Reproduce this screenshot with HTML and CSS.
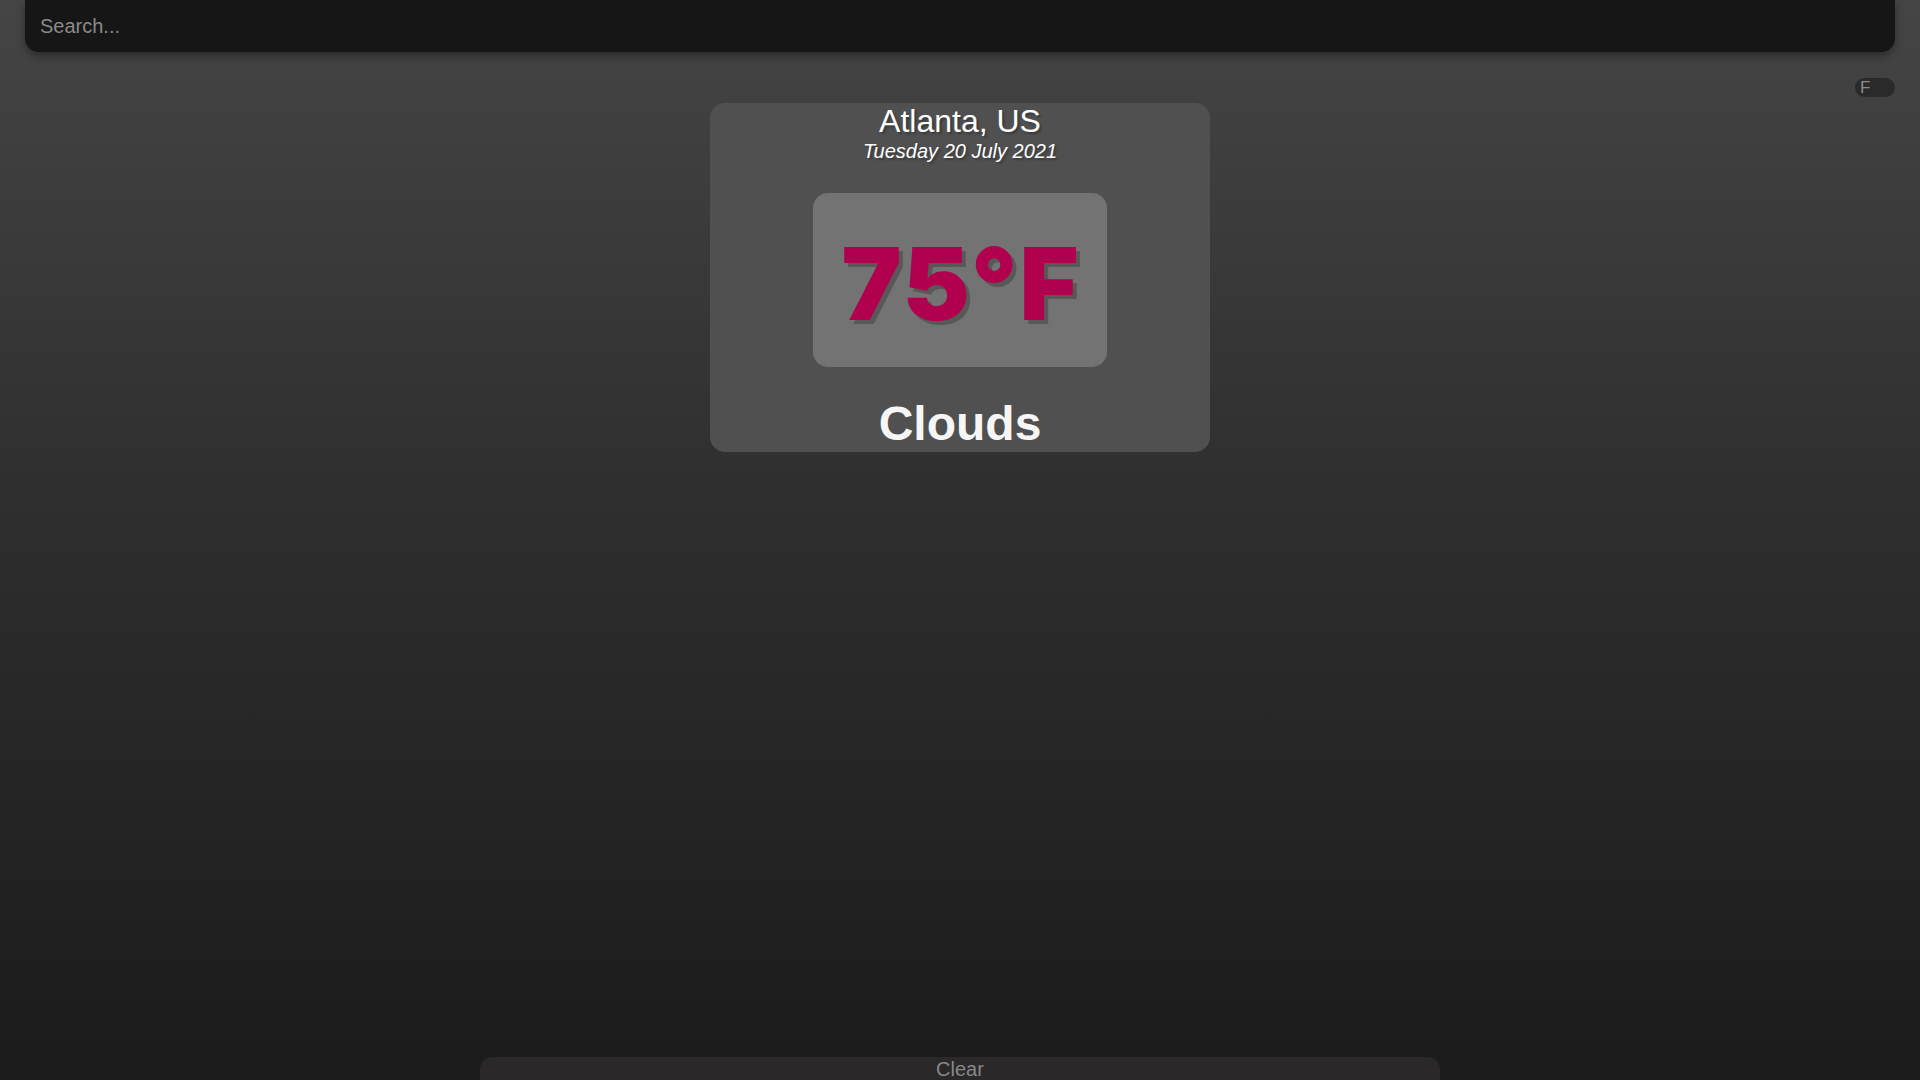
FILE: index.html
```html
<!DOCTYPE html>
<html lang="en">
<head>
<meta charset="utf-8">
<title>Weather</title>
<link rel="stylesheet" href="styles.css">
</head>
<body>
<div class="page">
  <header class="search-wrap">
    <input class="search" type="text" placeholder="Search...">
  </header>
  <div class="toggle-row">
    <div class="toggle"><span class="toggle-label">F</span></div>
  </div>
  <main class="card">
    <h2 class="location">Atlanta, US</h2>
    <div class="date">Tuesday 20 July 2021</div>
    <div class="temp-box"><span class="temp">75°F</span></div>
    <div class="weather">Clouds</div>
  </main>
  <footer class="footer">
    <button class="clear">Clear</button>
  </footer>
</div>
</body>
</html>
```
FILE: styles.css
```css
html, body {
  margin: 0;
  padding: 0;
  height: 100%;
}
body {
  background: linear-gradient(to bottom, #454545 0%, #2f2f2f 45%, #1b1b1b 100%);
  font-family: "Liberation Sans", Arial, sans-serif;
  color: #fff;
  overflow: hidden;
}
.page {
  height: 1080px;
  display: flex;
  flex-direction: column;
  padding: 0 25px;
  box-sizing: border-box;
}
.search-wrap {
  height: 52px;
}
.search {
  width: 100%;
  height: 52px;
  box-sizing: border-box;
  border: none;
  outline: none;
  background: #161616;
  border-radius: 0 0 14px 14px;
  padding: 0 15px;
  font-family: "Liberation Sans", Arial, sans-serif;
  font-size: 20px;
  color: #ddd;
  box-shadow: 0 4px 8px rgba(0,0,0,0.35);
}
.search::placeholder {
  color: #8a8a8a;
}
.toggle-row {
  display: flex;
  justify-content: flex-end;
  margin-top: 26px;
}
.toggle {
  width: 40px;
  height: 19px;
  border-radius: 10px;
  background: #2a2a2a;
  display: flex;
  align-items: center;
  padding-left: 5px;
  box-sizing: border-box;
}
.toggle-label {
  font-size: 17px;
  line-height: 19px;
  color: #8c8c8c;
}
.card {
  align-self: center;
  width: 500px;
  margin-top: 6px;
  background: #505050;
  border-radius: 15px;
  display: flex;
  flex-direction: column;
  align-items: center;
  padding-bottom: 1px;
}
.location {
  margin: 0;
  font-size: 32px;
  font-weight: normal;
  color: #fff;
  text-shadow: 2px 2px 2px rgba(40,40,40,0.55);
}
.date {
  font-size: 20px;
  font-style: italic;
  color: #fff;
  text-shadow: 2px 2px 2px rgba(40,40,40,0.55);
}
.temp-box {
  margin-top: 30px;
  width: 294px;
  height: 174px;
  box-sizing: border-box;
  background: #737373;
  border-radius: 15px;
  display: flex;
  justify-content: center;
  padding-top: 32px;
}
.temp {
  font-family: Inter, "Liberation Sans", sans-serif;
  font-size: 101px;
  line-height: 117px;
  font-weight: 900;
  letter-spacing: 2px;
  margin-right: -2px;
  color: #b0004e;
  text-shadow: 4px 4px 0 #585858;
}
.weather {
  margin-top: 29px;
  font-size: 48px;
  font-weight: bold;
  color: #f6f6f6;
  line-height: 55px;
}
.footer {
  margin-top: auto;
  display: flex;
  justify-content: center;
}
.clear {
  width: 960px;
  height: 30px;
  margin-bottom: -7px;
  border: none;
  border-radius: 12px 12px 0 0;
  background: #2a2828;
  color: #888;
  font-family: "Liberation Sans", Arial, sans-serif;
  font-size: 20px;
  padding: 0;
  padding-bottom: 6px;
}
```
